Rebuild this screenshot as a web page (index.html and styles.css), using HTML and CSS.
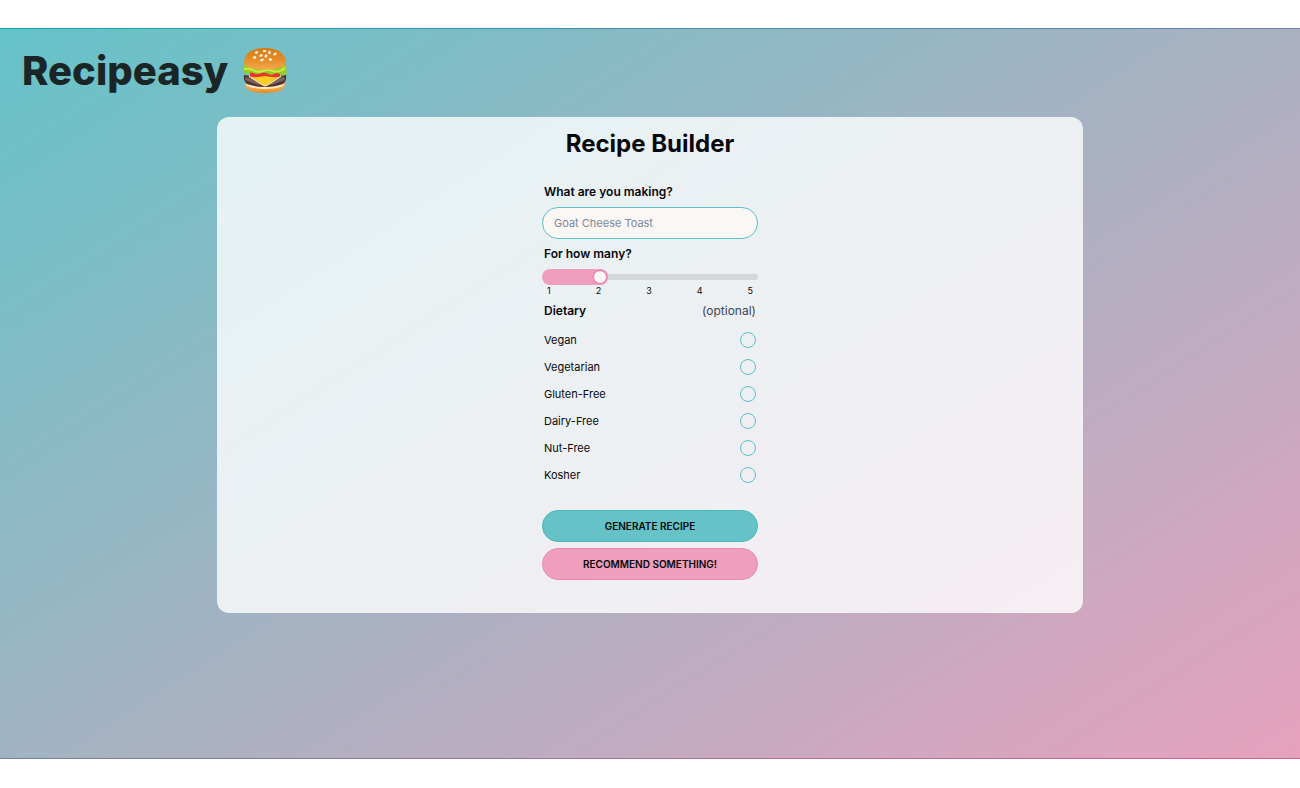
FILE: index.html
```html
<!DOCTYPE html>
<html lang="en">
<head>
    <meta charset="UTF-8">
    <meta name="viewport" content="width=device-width, initial-scale=1.0">
    <title>Recipeasy</title>
    <link rel="stylesheet" href="styles.css">
</head>
<body>
    <div class="page">
        <header class="header">
            <h1>Recipeasy</h1>
            <svg class="logo" viewBox="0 0 44 48" role="img" aria-label="Hamburger">
                <defs>
                    <linearGradient id="bun" x1="0" y1="0" x2="0" y2="1">
                        <stop offset="0" stop-color="#d67c15"/>
                        <stop offset="0.5" stop-color="#e58b26"/>
                        <stop offset="1" stop-color="#f3aa4d"/>
                    </linearGradient>
                    <linearGradient id="base" x1="0" y1="0" x2="0" y2="1">
                        <stop offset="0" stop-color="#f9c676"/>
                        <stop offset="1" stop-color="#e88f22"/>
                    </linearGradient>
                </defs>
                <!-- bottom bun -->
                <path d="M2 34 Q1 42 9 44.500 Q22 48 35 44.500 Q43 42 42 34 Z" fill="url(#base)"/>
                <path d="M3 36 Q22 44 41 36 L40 39 Q33 42 22 42 Q11 42 4 39 Z" fill="#fde8c3"/>
                <!-- patty -->
                <path d="M1 28 Q22 31 43 28 Q44 34 40 37 Q32 40 22 40 Q12 40 4 37 Q0 34 1 28 Z" fill="#4d3434"/>
                <path d="M3 30 Q9 31 18 37.500 L15 38 Q8 35 2 33 Z" fill="#7d625e"/>
                <path d="M41 30 Q35 31 26 37.500 L29 38 Q36 35 42 33 Z" fill="#7d625e"/>
                <!-- cheese -->
                <path d="M8 29 Q22 25 36 29 L24 37.500 Q22 39 20 37.500 Z" fill="#ffcb25"/>
                <path d="M6 29 L20 38 Q22 39.500 24 38 L38 29" fill="none" stroke="#ffe68f" stroke-width="1.500"/>
                <!-- tomato -->
                <path d="M7 25 H37 L37 29.500 Q30 31 22 29 Q14 31 7 29.500 Z" fill="#e8382b"/>
                <!-- lettuce -->
                <path d="M1 18 Q22 22 43 18 Q44 21 43 23 Q45 26 42 28 Q40 30 37 27 Q34 25 31 27 Q27 29 24 26 Q21 25 18 26 Q14 28 11 26 Q8 25 6 26 Q3 28 1 25 Q-1 22 1 18 Z" fill="#97cc22"/>
                <path d="M1 22 Q6 21 10 23 Q15 26 20 24 Q26 22 30 24 Q36 26 42 21" fill="none" stroke="#cdeb45" stroke-width="2"/>
                <!-- top bun -->
                <path d="M1 15 Q2 1 22 1 Q41 1 43 15 Q43 19 38 20.500 Q22 25 6 20.500 Q1 19 1 15 Z" fill="url(#bun)"/>
                <g fill="#fff6e6">
                    <ellipse cx="13.500" cy="5.500" rx="1.800" ry="1.200" transform="rotate(-20 13.500 5.500)"/>
                    <ellipse cx="21.500" cy="4" rx="1.900" ry="1.100"/>
                    <ellipse cx="26.500" cy="5.500" rx="1.200" ry="1.700" transform="rotate(-20 26.500 5.500)"/>
                    <ellipse cx="32" cy="7" rx="1.900" ry="1.200" transform="rotate(-40 32 7)"/>
                    <ellipse cx="18" cy="8.500" rx="1.800" ry="1.200" transform="rotate(-35 18 8.500)"/>
                    <ellipse cx="23" cy="9" rx="1.900" ry="1.200" transform="rotate(-55 23 9)"/>
                    <ellipse cx="11.500" cy="10.500" rx="1.800" ry="1.300"/>
                    <ellipse cx="27.500" cy="12.500" rx="1.900" ry="1.200" transform="rotate(15 27.500 12.500)"/>
                    <ellipse cx="19" cy="13" rx="1.900" ry="1.200" transform="rotate(-25 19 13)"/>
                </g>
            </svg>
        </header>

        <main class="card">
            <h2>Recipe Builder</h2>
            <form class="builder">
                <label class="label" for="dish">What are you making?</label>
                <input class="text-input" type="text" id="dish" placeholder="Goat Cheese Toast">

                <label class="label" for="people">For how many?</label>
                <input class="range" type="range" id="people" min="1" max="5" value="2">
                <div class="ticks">
                    <span>1</span>
                    <span>2</span>
                    <span>3</span>
                    <span>4</span>
                    <span>5</span>
                </div>

                <fieldset class="dietary">
                    <legend class="label">
                        <span>Dietary</span>
                        <span class="optional">(optional)</span>
                    </legend>
                    <label class="option">Vegan <input type="radio" name="diet"></label>
                    <label class="option">Vegetarian <input type="radio" name="diet"></label>
                    <label class="option">Gluten-Free <input type="radio" name="diet"></label>
                    <label class="option">Dairy-Free <input type="radio" name="diet"></label>
                    <label class="option">Nut-Free <input type="radio" name="diet"></label>
                    <label class="option">Kosher <input type="radio" name="diet"></label>
                </fieldset>

                <div class="actions">
                    <button type="submit" class="btn btn-primary">Generate Recipe</button>
                    <button type="button" class="btn btn-secondary">Recommend Something!</button>
                </div>
            </form>
        </main>
    </div>
</body>
</html>
```

FILE: styles.css
```css
* {
    box-sizing: border-box;
}
body {
    margin: 0;
    padding: 28px 0 29px;
    min-height: 100vh;
    display: flex;
    background: white;
    color: #06080c;
    font-family: Inter, "Liberation Sans", sans-serif;
}
.page {
    flex: 1;
    border: solid transparent;
    border-width: 1px 0;
    border-image: linear-gradient(to bottom right, #1a9fa6, #6c84a6, #d8608f) 1;
    background: linear-gradient(to bottom right, #65c3c8, #ef9fbc) 0 0 / 100% 115%;
}
.header {
    display: flex;
    align-items: center;
    gap: 15px;
    padding: 16px 22px 20px;
}
h1 {
    margin: 0;
    font-size: 40px;
    line-height: 52px;
    font-weight: 800;
    color: #1a2526;
}
.logo {
    width: 44px;
    height: 48px;
}
.card {
    width: 66.67%;
    margin: 0 auto;
    padding: 8px 24px 33px;
    border-radius: 12px;
    background: rgba(255, 255, 255, 0.8);
}
h2 {
    margin: 0 0 14px;
    font-size: 24px;
    line-height: 38px;
    font-weight: 700;
    text-align: center;
}
.builder {
    width: 216px;
    margin: 0 auto;
    display: flex;
    flex-direction: column;
}
.label {
    display: flex;
    justify-content: space-between;
    padding: 6px 2px;
    font-size: 12px;
    line-height: 18px;
    font-weight: 600;
}
.text-input {
    height: 32px;
    width: 100%;
    padding: 0 11px;
    border: 1px solid #5cc0c5;
    border-radius: 16px;
    background: #faf7f5;
    color: inherit;
    font-family: inherit;
    font-size: 11px;
}
.text-input::placeholder {
    color: #7c889c;
}
.range {
    appearance: none;
    width: 100%;
    height: 16px;
    margin: 0;
    border-radius: 8px;
    overflow: hidden;
    background: transparent;
    cursor: pointer;
}
.range::-webkit-slider-runnable-track {
    height: 6px;
    border-radius: 3px;
    background: #d3d7db;
}
.range::-webkit-slider-thumb {
    appearance: none;
    width: 16px;
    height: 16px;
    margin-top: -5px;
    border-radius: 50%;
    background: #faf7f5;
    box-shadow: 0 0 0 2px #ef86ae inset, -408px 0 0 400px #ef9fbc;
}
.ticks {
    display: flex;
    justify-content: space-between;
    padding: 0 5px;
    font-size: 9px;
    line-height: 11px;
}
.dietary {
    margin: 0;
    padding: 0;
    border: 0;
}
.dietary legend {
    width: 100%;
}
.optional {
    font-weight: 400;
    color: #3d4652;
}
.option {
    display: flex;
    align-items: center;
    justify-content: space-between;
    height: 27px;
    padding: 0 2px;
    font-size: 11px;
    cursor: pointer;
}
.option input {
    appearance: none;
    width: 16px;
    height: 16px;
    margin: 0;
    border: 1px solid #5cc0c5;
    border-radius: 50%;
}
.option input:checked {
    background: #65c3c8;
}
.actions {
    display: flex;
    flex-direction: column;
    gap: 6px;
    margin-top: 22px;
}
.btn {
    height: 32px;
    border-radius: 16px;
    color: inherit;
    font-family: inherit;
    font-size: 10px;
    font-weight: 600;
    text-transform: uppercase;
    cursor: pointer;
}
.btn-primary {
    border: 1px solid #49b8be;
    background: #65c3c8;
}
.btn-secondary {
    border: 1px solid #ee88ae;
    background: #ef9fbc;
}
```
